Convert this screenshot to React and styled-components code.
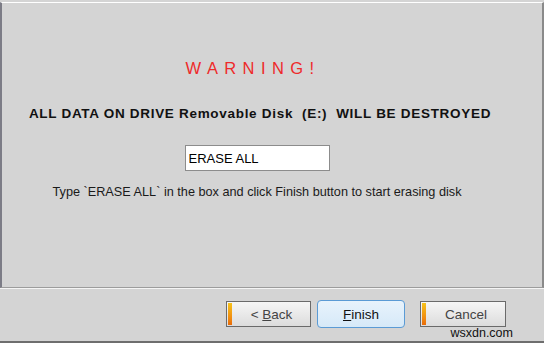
import React from "react";
import styled, { createGlobalStyle } from "styled-components";

const Global = createGlobalStyle`
  html, body { margin: 0; padding: 0; background: #d4d4d4; }
  #root { width: 544px; height: 343px; overflow: hidden; }
  * { box-sizing: border-box; }
`;

const Window = styled.div`
  width: 544px;
  height: 343px;
  display: flex;
  flex-direction: column;
  background: #d4d4d4;
  font-family: "Liberation Sans", Arial, sans-serif;
  border-bottom: 2px solid #6e6e6e;
`;

const Panel = styled.div`
  height: 286px;
  margin-top: 2px;
  border-top: 1px solid #ffffff;
  border-left: 2px solid #7c7c86;
  border-right: 2px solid #8a8a8a;
  border-bottom: 1px solid #9c9c9c;
  display: flex;
  flex-direction: column;
  align-items: center;
  padding-top: 55px;
  padding-right: 28px;
`;

const Warning = styled.div`
  color: #ee2a2a;
  font-size: 16.5px;
  letter-spacing: 6.4px;
  margin-right: 10px;
  line-height: 20px;
`;

const Destroy = styled.div`
  margin-top: 28px;
  font-weight: bold;
  font-size: 13.5px;
  letter-spacing: 0.7px;
  margin-left: 4px;
  color: #111;
  line-height: 15px;
  white-space: pre;
`;

const Field = styled.input`
  margin-top: 24px;
  margin-right: 2px;
  width: 145px;
  height: 26px;
  border: 1px solid #8c8c8c;
  background: #fff;
  font-family: "Liberation Sans", Arial, sans-serif;
  font-size: 13px;
  padding: 0 3px;
  color: #000;
  outline: none;
  caret-color: #000;
`;

const Hint = styled.div`
  margin-top: 14px;
  font-size: 12.7px;
  color: #1a1a1a;
  line-height: 15px;
  margin-right: 2px;
`;

const Footer = styled.div`
  flex: 1;
  border-top: 1px solid #f4f4f4;
  display: flex;
  justify-content: flex-end;
  align-items: flex-start;
  padding-top: 12px;
  padding-right: 38px;
  position: relative;
`;

const Button = styled.button`
  position: relative;
  width: ${(p) => p.$w || 85}px;
  height: ${(p) => (p.$primary ? 28 : 26)}px;
  margin-top: ${(p) => (p.$primary ? -1 : 0)}px;
  margin-left: ${(p) => p.$ml || 0}px;
  border: 1px solid ${(p) => (p.$primary ? "#5b9bd5" : "#6a6a6a")};
  border-radius: ${(p) => (p.$primary ? "4px" : "0")};
  background: ${(p) =>
    p.$primary
      ? "linear-gradient(#e8f3fc, #d6e9f8)"
      : "linear-gradient(#f6f6f6, #dcdcdc)"};
  font-family: "Liberation Sans", Arial, sans-serif;
  font-size: 13.5px;
  color: ${(p) => (p.$primary ? "#111" : "#444")};
  padding: 0 0 0 ${(p) => (p.$primary ? 0 : 6)}px;
  display: flex;
  align-items: center;
  justify-content: center;
  white-space: pre;
  &::before {
    content: "";
    display: ${(p) => (p.$primary ? "none" : "block")};
    position: absolute;
    left: 1px;
    top: 1px;
    bottom: 1px;
    width: 4px;
    background: linear-gradient(#f6c21a, #f08a10 70%, #e86a08);
  }
`;

const Key = styled.span`
  text-decoration: underline;
`;

const Mark = styled.div`
  position: absolute;
  right: 31px;
  bottom: 1px;
  font-size: 12.5px;
  color: #111;
  background: #d4d4d4;
  line-height: 13px;
`;

export default function App() {
  return (
    <>
      <Global />
      <Window>
        <Panel>
          <Warning>WARNING!</Warning>
          <Destroy>ALL DATA ON DRIVE Removable Disk  (E:)  WILL BE DESTROYED</Destroy>
          <Field defaultValue="ERASE ALL" />
          <Hint>Type `ERASE ALL` in the box and click Finish button to start erasing disk</Hint>
        </Panel>
        <Footer>
          <Button $w={85} $ml={2}>
            <span>{"< "}<Key>B</Key>ack</span>
          </Button>
          <Button $primary $w={88} $ml={6}>
            <span><Key>F</Key>inish</span>
          </Button>
          <Button $w={86} $ml={15}>
            <span>Cancel</span>
          </Button>
          <Mark>wsxdn.com</Mark>
        </Footer>
      </Window>
    </>
  );
}
